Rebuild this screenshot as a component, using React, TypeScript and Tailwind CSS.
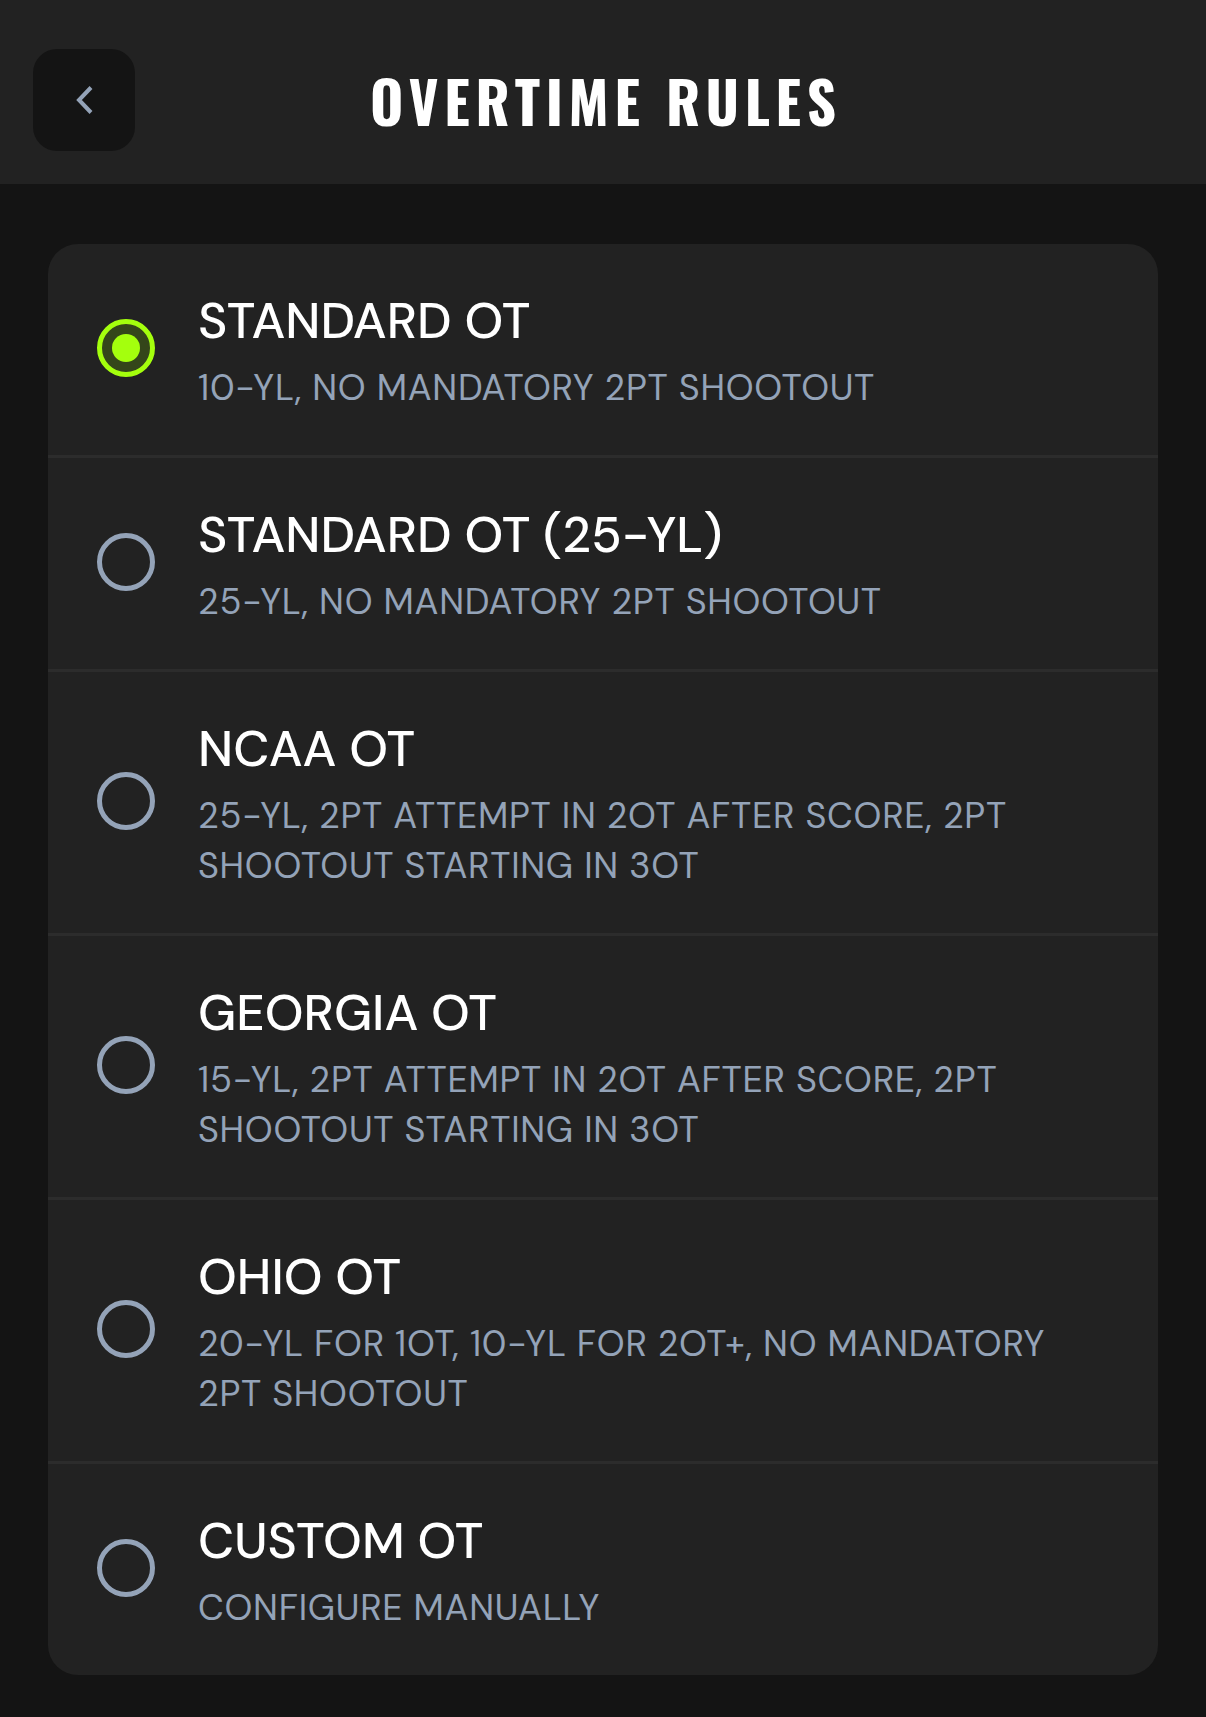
import { useState } from 'react';

interface Rule {
  id: string;
  title: string;
  description: string;
}

const rules: Rule[] = [
  { id: 'standard', title: 'STANDARD OT', description: '10-YL, NO MANDATORY 2PT SHOOTOUT' },
  { id: 'standard25', title: 'STANDARD OT (25-YL)', description: '25-YL, NO MANDATORY 2PT SHOOTOUT' },
  { id: 'ncaa', title: 'NCAA OT', description: '25-YL, 2PT ATTEMPT IN 2OT AFTER SCORE, 2PT SHOOTOUT STARTING IN 3OT' },
  { id: 'georgia', title: 'GEORGIA OT', description: '15-YL, 2PT ATTEMPT IN 2OT AFTER SCORE, 2PT SHOOTOUT STARTING IN 3OT' },
  { id: 'ohio', title: 'OHIO OT', description: '20-YL FOR 1OT, 10-YL FOR 2OT+, NO MANDATORY 2PT SHOOTOUT' },
  { id: 'custom', title: 'CUSTOM OT', description: 'CONFIGURE MANUALLY' },
];

const Radio = ({ checked }: { checked: boolean }) => {
  if (checked) {
    return (
      <div className="mb-[10px] flex h-[58px] w-[58px] shrink-0 items-center justify-center rounded-full border-[5px] border-[#a4ff0d] bg-[#34461a]">
        <div className="h-[28px] w-[28px] rounded-full bg-[#a4ff0d]" />
      </div>
    );
  }
  return <div className="mb-[10px] h-[58px] w-[58px] shrink-0 rounded-full border-[5px] border-[#94a3b8]" />;
};

const App = () => {
  const [selected, setSelected] = useState('standard');

  return (
    <div className="min-h-screen bg-[#141414] pb-[45px] font-['DM_Sans','Inter',sans-serif]">
      {/* header */}
      <div className="flex h-[184px] items-start bg-[#222222] px-[33px] pt-[49px]">
        <button className="flex h-[102px] w-[102px] items-center justify-center rounded-[24px] bg-[#141414]">
          <svg width="20" height="30" viewBox="0 0 20 30" fill="none">
            <polyline points="17,2.5 5,15 17,27.5" stroke="#94a3b8" strokeWidth="4" />
          </svg>
        </button>
        <div className="flex h-[102px] flex-1 items-center justify-center pt-[1px]">
          <h1 className="pl-[0.1em] font-['Oswald',sans-serif] text-[57px] font-bold leading-none tracking-[0.1em] text-white">
            OVERTIME RULES
          </h1>
        </div>
        <div className="w-[102px]" />
      </div>

      {/* options */}
      <div className="mx-[48px] mt-[60px] overflow-hidden rounded-[30px] bg-[#222222]">
        {rules.map((rule, i) => (
          <div
            key={rule.id}
            onClick={() => setSelected(rule.id)}
            className={`flex cursor-pointer items-center gap-[43px] pl-[49px] pr-[78px] pt-[49px] pb-[42px] ${
              i < rules.length - 1 ? 'border-b-[3px] border-[#2c2c2c]' : ''
            }`}
          >
            <Radio checked={selected === rule.id} />
            <div className="min-w-0 flex-1">
              <p className="text-[50px] font-medium leading-[56px] text-white">{rule.title}</p>
              <p className="mt-[14px] text-[36px] leading-[50px] tracking-[0.02em] text-[#94a3b8]">{rule.description}</p>
            </div>
          </div>
        ))}
      </div>
    </div>
  );
};

export default App;
